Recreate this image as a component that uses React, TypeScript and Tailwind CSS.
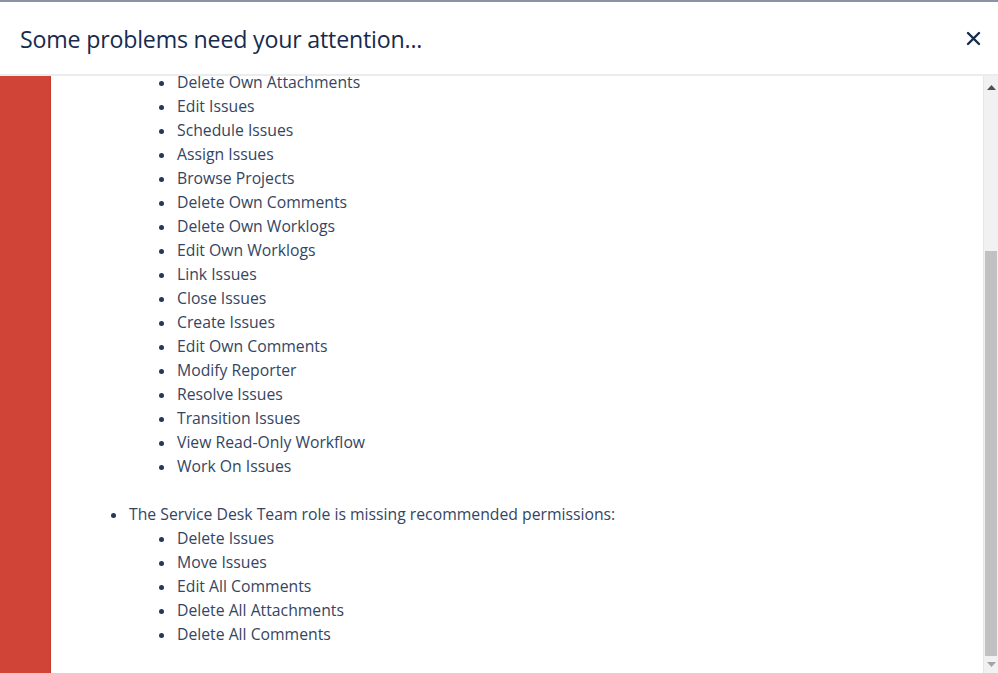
import React from 'react';

const ownPerms = [
  'Delete Own Attachments',
  'Edit Issues',
  'Schedule Issues',
  'Assign Issues',
  'Browse Projects',
  'Delete Own Comments',
  'Delete Own Worklogs',
  'Edit Own Worklogs',
  'Link Issues',
  'Close Issues',
  'Create Issues',
  'Edit Own Comments',
  'Modify Reporter',
  'Resolve Issues',
  'Transition Issues',
  'View Read-Only Workflow',
  'Work On Issues',
];

const teamPerms = [
  'Delete Issues',
  'Move Issues',
  'Edit All Comments',
  'Delete All Attachments',
  'Delete All Comments',
];

function Item({ children }: { children: React.ReactNode }) {
  return (
    <li className="flex items-center h-6">
      <span className="w-[5px] h-[5px] rounded-full bg-[#253858] shrink-0" />
      <span className="ml-[13px] whitespace-nowrap">{children}</span>
    </li>
  );
}

export default function App() {
  return (
    <div
      className="w-[998px] h-[673px] bg-white flex flex-col overflow-hidden text-[#344563]"
      style={{ fontFamily: '"Open Sans", "Noto Sans", sans-serif' }}
    >
      {/* Header */}
      <div className="h-[76px] shrink-0 border-t-2 border-[#8993a4] border-b-2 border-b-[#ebecf0] flex items-center justify-between pl-5 pr-[13px]">
        <h2 className="text-[23.2px] text-[#172b4d] tracking-[-0.2px] mt-[2px]">
          Some problems need your attention...
        </h2>
        <button className="text-[#172b4d] p-1">
          <svg width="15" height="15" viewBox="0 0 15 15">
            <path d="M2 2 L13 13 M13 2 L2 13" stroke="currentColor" strokeWidth="2.4" strokeLinecap="round" />
          </svg>
        </button>
      </div>

      {/* Body */}
      <div className="flex flex-1 min-h-0">
        <div className="w-[51px] bg-[#d04437] border-r border-[#c63a2e] shrink-0" />
        <div className="flex-1 overflow-hidden">
          <div className="mt-[-5px] pl-[60px] text-[15.75px]">
            <ul className="pl-[48px]">
              {ownPerms.map(p => (
                <Item key={p}>{p}</Item>
              ))}
            </ul>
            <ul className="mt-6">
              <Item>The Service Desk Team role is missing recommended permissions:</Item>
              <li>
                <ul className="pl-[48px]">
                  {teamPerms.map(p => (
                    <Item key={p}>{p}</Item>
                  ))}
                </ul>
              </li>
            </ul>
          </div>
        </div>

        {/* Scrollbar */}
        <div className="w-[15px] shrink-0 bg-[#f1f1f1] border-l border-[#e6e6e6] flex flex-col">
          <div className="h-[22px] flex items-center justify-center">
            <svg width="9" height="5" viewBox="0 0 9 5">
              <path d="M4.5 0 L9 5 L0 5 Z" fill="#505050" />
            </svg>
          </div>
          <div className="h-[153px]" />
          <div className="flex-1 bg-[#c1c1c1] mx-[1px]" />
          <div className="h-[17px] flex items-center justify-center">
            <svg width="9" height="5" viewBox="0 0 9 5">
              <path d="M0 0 L9 0 L4.5 5 Z" fill="#a3a3a3" />
            </svg>
          </div>
        </div>
      </div>
    </div>
  );
}
